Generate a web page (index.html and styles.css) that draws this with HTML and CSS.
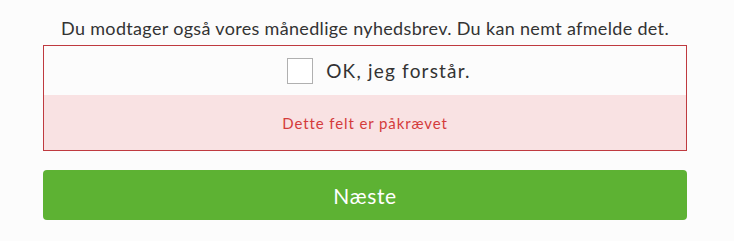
FILE: index.html
```html
<!DOCTYPE html>
<html lang="da">
<head>
<meta charset="utf-8">
<link rel="stylesheet" href="styles.css">
</head>
<body>
<div class="wrap">
  <p class="intro">Du modtager også vores månedlige nyhedsbrev. Du kan nemt afmelde det.</p>
  <div class="field">
    <label class="check-row"><span class="box"></span><span class="label">OK, jeg forstår.</span></label>
    <div class="error">Dette felt er påkrævet</div>
  </div>
  <button class="next">Næste</button>
</div>
</body>
</html>
```
FILE: styles.css
```css
html, body { margin: 0; padding: 0; }
body {
  background: #fcfcfc;
  font-family: "Lato", "Open Sans", sans-serif;
  color: #333;
  width: 734px;
  height: 241px;
  overflow: hidden;
}
.wrap {
  width: 644px;
  margin-left: 43px;
  padding-top: 16px;
}
.intro {
  margin: 0;
  height: 29px;
  text-align: center;
  font-size: 18px;
  letter-spacing: 0.33px;
  line-height: 24px;
  color: #333;
}
.field {
  border: 1px solid #bf3a3f;
  background: #fcfcfc;
}
.check-row {
  height: 49px;
  display: flex;
  align-items: center;
  justify-content: center;
  gap: 13px;
  padding-left: 28px;
}
.box {
  width: 24px;
  height: 24px;
  border: 1px solid #b0b0b0;
  background: #fff;
  box-sizing: content-box;
}
.label {
  font-size: 19px;
  letter-spacing: 1.2px;
  color: #333;
}
.error {
  height: 55px;
  background: #f9e2e3;
  display: flex;
  align-items: center;
  justify-content: center;
  color: #d43b3b;
  font-size: 15px;
  letter-spacing: 0.9px;
}
.next {
  display: block;
  margin-top: 19px;
  width: 644px;
  height: 50px;
  border: 0;
  border-radius: 4px;
  background: #5db233;
  color: #fff;
  font-family: inherit;
  font-size: 21px;
  letter-spacing: 0.6px;
}
```
